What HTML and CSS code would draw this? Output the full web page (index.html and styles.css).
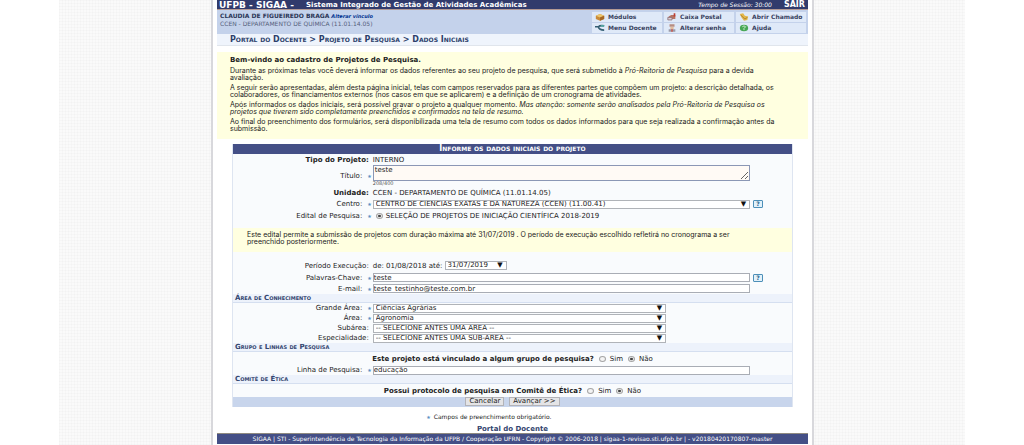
FILE: index.html
```html
<!DOCTYPE html>
<html lang="pt-BR">
<head>
<meta charset="utf-8">
<title>SIGAA - Projeto de Pesquisa</title>
<link rel="stylesheet" href="styles.css">
</head>
<body>
<div class="backdrop">
<div class="page">
  <header>
    <div class="topbar">
      <strong class="brand">UFPB - SIGAA -</strong>
      <span class="system">Sistema Integrado de Gestão de Atividades Acadêmicas</span>
      <em class="session">Tempo de Sessão: 30:00</em>
      <a class="exit" href="#">SAIR</a>
    </div>
    <div class="userbar">
      <div class="user">
        <div><strong>CLAUDIA DE FIGUEIREDO BRAGA</strong> <a class="change" href="#">Alterar vínculo</a></div>
        <div class="unit">CCEN - DEPARTAMENTO DE QUÍMICA (11.01.14.05)</div>
      </div>
      <nav class="menu">
        <a href="#"><svg viewBox="0 0 12 9"><path d="M1 3l5-2 5 2v4L6 9 1 7z" fill="#c88a3a"/><path d="M1 3l5-2 5 2-5 2z" fill="#ecc66d"/><path d="M6 5v4l5-2V3z" fill="#a56725"/></svg>Módulos</a>
        <a href="#"><svg viewBox="0 0 12 9"><path d="M2 4l3-2h5v5H2z" fill="#b77463"/><path d="M1 5h5v3H1z" fill="#d9d3d8" stroke="#8e6d75"/><path d="M8 0h2v4H8z" fill="#bd3d32"/></svg>Caixa Postal</a>
        <a href="#"><svg viewBox="0 0 12 9"><path d="M1 1l4-1 2 3 4 1-1 4-4 1-3-4z" fill="#e4b749"/><path d="M2 2l5 5 3-2" fill="none" stroke="#a17a34"/></svg>Abrir Chamado</a>
        <a href="#"><svg viewBox="0 0 12 9"><path d="M0 3h4M4 3q2-2 7-1M4 3q1 4 7 4" fill="none" stroke="#345e73" stroke-width="2"/><path d="M7 1h4v2H7z" fill="#57aaa5"/></svg>Menu Docente</a>
        <a href="#"><svg viewBox="0 0 12 9"><path d="M3 0h6v3H3z" fill="#b68d83"/><path d="M4 3h4v3H4z" fill="#e2bda0"/><path d="M2 6h8v3H2z" fill="#9b9ba8"/><path d="M5 6h2v3H5z" fill="#c75c55"/></svg>Alterar senha</a>
        <a href="#"><svg viewBox="0 0 12 9"><ellipse cx="6" cy="4.500" rx="5" ry="4" fill="#46a755"/><path d="M4 3q2-2 4 0L6 5v2" fill="none" stroke="#e3f4e2"/></svg>Ajuda</a>
      </nav>
    </div>
    <h1 class="crumbs"><a href="#">Portal do Docente</a> &gt; Projeto de Pesquisa &gt; Dados Iniciais</h1>
  </header>

  <main>
    <section class="intro">
      <p class="welcome">Bem-vindo ao cadastro de Projetos de Pesquisa.</p>
      <p>Durante as próximas telas você deverá informar os dados referentes ao seu projeto de pesquisa, que será submetido à <em>Pró-Reitoria de Pesquisa</em> para a devida<br>avaliação.</p>
      <p>A seguir serão apresentadas, além desta página inicial, telas com campos reservados para as diferentes partes que compõem um projeto: a descrição detalhada, os<br>colaboradores, os financiamentos externos (nos casos em que se aplicarem) e a definição de um cronograma de atividades.</p>
      <p>Após informados os dados iniciais, será possível gravar o projeto a qualquer momento. <em>Mas atenção: somente serão analisados pela Pró-Reitoria de Pesquisa os<br>projetos que tiverem sido completamente preenchidos e confirmados na tela de resumo.</em></p>
      <p>Ao final do preenchimento dos formulários, será disponibilizada uma tela de resumo com todos os dados informados para que seja realizada a confirmação antes da<br>submissão.</p>
    </section>

    <form class="form">
      <h2 class="caption">Informe os dados iniciais do projeto</h2>
      <div class="row first"><strong class="label">Tipo do Projeto:</strong><div>INTERNO</div></div>
      <div class="row title"><label class="label req" for="titulo">Título:</label><div><textarea id="titulo" class="wide" rows="1">teste</textarea><div class="count">208/400</div></div></div>
      <div class="row tall"><strong class="label">Unidade:</strong><div>CCEN - DEPARTAMENTO DE QUÍMICA (11.01.14.05)</div></div>
      <div class="row"><label class="label req" for="centro">Centro:</label><div class="field"><span class="pick wide"><select id="centro"><option>CENTRO DE CIÊNCIAS EXATAS E DA NATUREZA (CCEN) (11.00.41)</option></select></span><button type="button" class="help" aria-label="Ajuda sobre o centro">?</button></div></div>
      <div class="row tall"><span class="label req">Edital de Pesquisa:</span><div class="field"><input type="radio" id="edital" name="edital" checked><label for="edital">SELEÇÃO DE PROJETOS DE INICIAÇÃO CIENTÍFICA 2018-2019</label></div></div>
      <p class="note">Este edital permite a submissão de projetos com duração máxima até 31/07/2019 . O período de execução escolhido refletirá no cronograma a ser<br>preenchido posteriormente.</p>
      <div class="row tall"><label class="label" for="periodo">Período Execução:</label><div class="field">de: 01/08/2018 até:&nbsp;<span class="pick date"><select id="periodo"><option>31/07/2019</option></select></span></div></div>
      <div class="row entry"><label class="label req" for="chave">Palavras-Chave:</label><div class="field"><input class="wide" id="chave" type="text" value="teste"><button type="button" class="help" aria-label="Ajuda sobre palavras-chave">?</button></div></div>
      <div class="row entry"><label class="label req" for="email">E-mail:</label><div class="field"><input class="wide" id="email" type="text" value="teste_testinho@teste.com.br"></div></div>

      <h3 class="section">Área de Conhecimento</h3>
      <div class="row"><label class="label req" for="grande">Grande Área:</label><div class="field"><span class="pick mid"><select id="grande"><option>Ciências Agrárias</option></select></span></div></div>
      <div class="row"><label class="label req" for="area">Área:</label><div class="field"><span class="pick mid"><select id="area"><option>Agronomia</option></select></span></div></div>
      <div class="row"><label class="label" for="subarea">Subárea:</label><div class="field"><span class="pick mid"><select id="subarea"><option>-- SELECIONE ANTES UMA ÁREA --</option></select></span></div></div>
      <div class="row"><label class="label" for="esp">Especialidade:</label><div class="field"><span class="pick mid"><select id="esp"><option>-- SELECIONE ANTES UMA SUB-ÁREA --</option></select></span></div></div>

      <h3 class="section">Grupo e Linhas de Pesquisa</h3>
      <div class="question"><strong>Este projeto está vinculado a algum grupo de pesquisa?</strong><input type="radio" id="g1" name="grupo"><label for="g1">Sim</label><input type="radio" id="g2" name="grupo" checked><label for="g2">Não</label></div>
      <div class="row"><label class="label req" for="linha">Linha de Pesquisa:</label><div class="field"><input class="wide" id="linha" type="text" value="educação"></div></div>

      <h3 class="section">Comitê de Ética</h3>
      <div class="question"><strong>Possui protocolo de pesquisa em Comitê de Ética?</strong><input type="radio" id="e1" name="etica"><label for="e1">Sim</label><input type="radio" id="e2" name="etica" checked><label for="e2">Não</label></div>
      <div class="actions"><button type="button">Cancelar</button><button type="button">Avançar &gt;&gt;</button></div>
    </form>
    <p class="legend">Campos de preenchimento obrigatório.</p>
    <p class="back"><a href="#">Portal do Docente</a></p>
  </main>
  <footer class="footer">SIGAA | STI - Superintendência de Tecnologia da Informação da UFPB / Cooperação UFRN - Copyright © 2006-2018 | sigaa-1-revisao.sti.ufpb.br | - v20180420170807-master</footer>
</div>
</div>
</body>
</html>
```
FILE: styles.css
```css
* { box-sizing: border-box; }
body { margin: 0; background: #fff; color: #222; font: 7px/10px "DejaVu Sans", Verdana, sans-serif; }
h1, h2, h3, p { margin: 0; }
a { color: #003390; text-decoration: none; }
input, select, textarea, button { font: inherit; color: inherit; margin: 0; }

.backdrop {
  margin: 0 59px;
  padding: 0 151px 0 152px;
  background:
    repeating-linear-gradient(90deg, rgba(0,0,0,.015) 0 1px, transparent 1px 3px),
    repeating-linear-gradient(0deg, rgba(0,0,0,.015) 0 1px, transparent 1px 3px),
    #fafafa;
}
.page { padding: 0 4px 1px; background: #fff; border: solid #d8d8dc; border-width: 0 2px; }

.topbar { display: flex; align-items: center; height: 10px; padding: 0 3px 0 2px; background: #313b6c; border-bottom: 1px solid #b39a94; color: #fff; }
.brand { font-size: 9px; width: 87px; white-space: nowrap; }
.system { flex: 1; font-weight: bold; }
.session { font-size: 6px; margin-right: 12px; }
.exit { color: #fff; font-weight: bold; font-size: 8px; }

.userbar { display: flex; justify-content: space-between; min-height: 23px; padding: 2px 2px 1px 3px; background: #c4d2eb; }
.user { line-height: 8px; color: #2b3556; font-size: 6px; }
.unit { color: #56617c; }
.change { font-weight: bold; font-style: italic; font-size: 5px; }
.menu { display: grid; grid-template-columns: repeat(3, 70px); gap: 1px 2px; }
.menu a { display: flex; align-items: center; gap: 3px; padding-left: 3px; background: #dfe9f8; color: #39435f; font-size: 6px; font-weight: bold; }
.menu svg { width: 10px; height: 8px; }
.crumbs { padding: 0 13px; background: #eff4fc; border-bottom: 1px solid #e0e5ec; color: #2c3f6b; font-size: 8px; line-height: 11px; font-variant: small-caps; }
.crumbs a { color: inherit; }

.intro, .note { background: #ffffe0; font-family: Inter, "DejaVu Sans", sans-serif; line-height: 7px; white-space: nowrap; }
.intro { margin-top: 6px; padding: 5px 13px 7px; }
.intro p + p { margin-top: 3px; }
.welcome { font-family: "DejaVu Sans", Verdana, sans-serif; font-weight: bold; }

.form { margin: 5px 15px 0; background: #f9fbfd; border: solid #dee5f1; border-width: 0 1px; }
.caption { background: #444f86; color: #fff; font-size: 8px; line-height: 10px; text-align: center; font-variant: small-caps; }
.row { display: grid; grid-template-columns: 25% 1fr; align-items: center; min-height: 10px; }
.first { min-height: 11px; }
.entry { min-height: 11px; }
.tall { min-height: 13px; }
.label { text-align: right; padding-right: 4px; }
.req { padding-right: 0; }
.req::after { content: "★"; color: #5c8fc4; font-size: 5px; margin: 0 1px 0 5px; }
.field { display: flex; align-items: center; }
.wide { width: 90%; }
.mid { width: 70%; }
.date { width: 62px; }
textarea { display: block; height: 16px; padding: 0 1px; border: 1px solid #8b97b5; background: #fffaf5; line-height: 8px; overflow: hidden; }
.count { font-size: 5px; line-height: 5px; color: #555; }
input[type="text"] { height: 9px; padding: 0; border: 1px solid #a9adb5; background: #fff; line-height: 7px; }
.pick { position: relative; display: block; }
.pick select { display: block; width: 100%; height: 9px; padding: 0 2px; border: 1px solid #b0b3b8; border-radius: 0; background: #fff; appearance: none; line-height: 7px; }
.pick::after { content: "▼"; position: absolute; right: 4px; top: 0; line-height: 9px; color: #111; pointer-events: none; }
.help { width: 10px; height: 8px; margin-left: 3px; padding: 0; border: 1px solid #4d8fb8; border-radius: 1px; background: #e2f1fa; color: #27638f; font-weight: bold; font-size: 6px; line-height: 6px; }
input[type="radio"] { appearance: none; width: 7px; height: 6px; margin: 0 3px; border: 1px solid #a5a5a5; border-radius: 50%; background: #f4f4f4; }
input[type="radio"]:checked { background: radial-gradient(#444 0 1px, #eee 2px); }
.note { margin: 6px 0 7px; padding: 3px 14px 7px; }
.section { padding: 0 2px; background: #edf2fb; border-bottom: 1px solid #d5dff0; color: #33456f; font-size: 7px; line-height: 8px; font-variant: small-caps; }
.question { display: flex; justify-content: center; align-items: center; min-height: 13px; }
.question input[type="radio"] { margin: 0 4px 0 5px; }
.actions { display: flex; justify-content: center; gap: 5px; background: #c8d5ec; padding-bottom: 1px; }
.actions button { height: 9px; padding: 0 3px; border: 1px solid #b3b3b8; background: #e4e4e6; line-height: 7px; }
.legend { margin-top: 5px; padding-right: 8%; text-align: center; font-size: 6px; }
.legend::before { content: "★"; color: #5c8fc4; font-size: 5px; margin-right: 3px; }
.back { margin-top: 3px; text-align: center; font-weight: bold; line-height: 8px; }
.back a { color: #33456f; }
.footer { background: #444f86; border-top: 1px solid #8f8a80; color: #fff; font-size: 6px; text-align: center; white-space: nowrap; line-height: 10px; }
```
